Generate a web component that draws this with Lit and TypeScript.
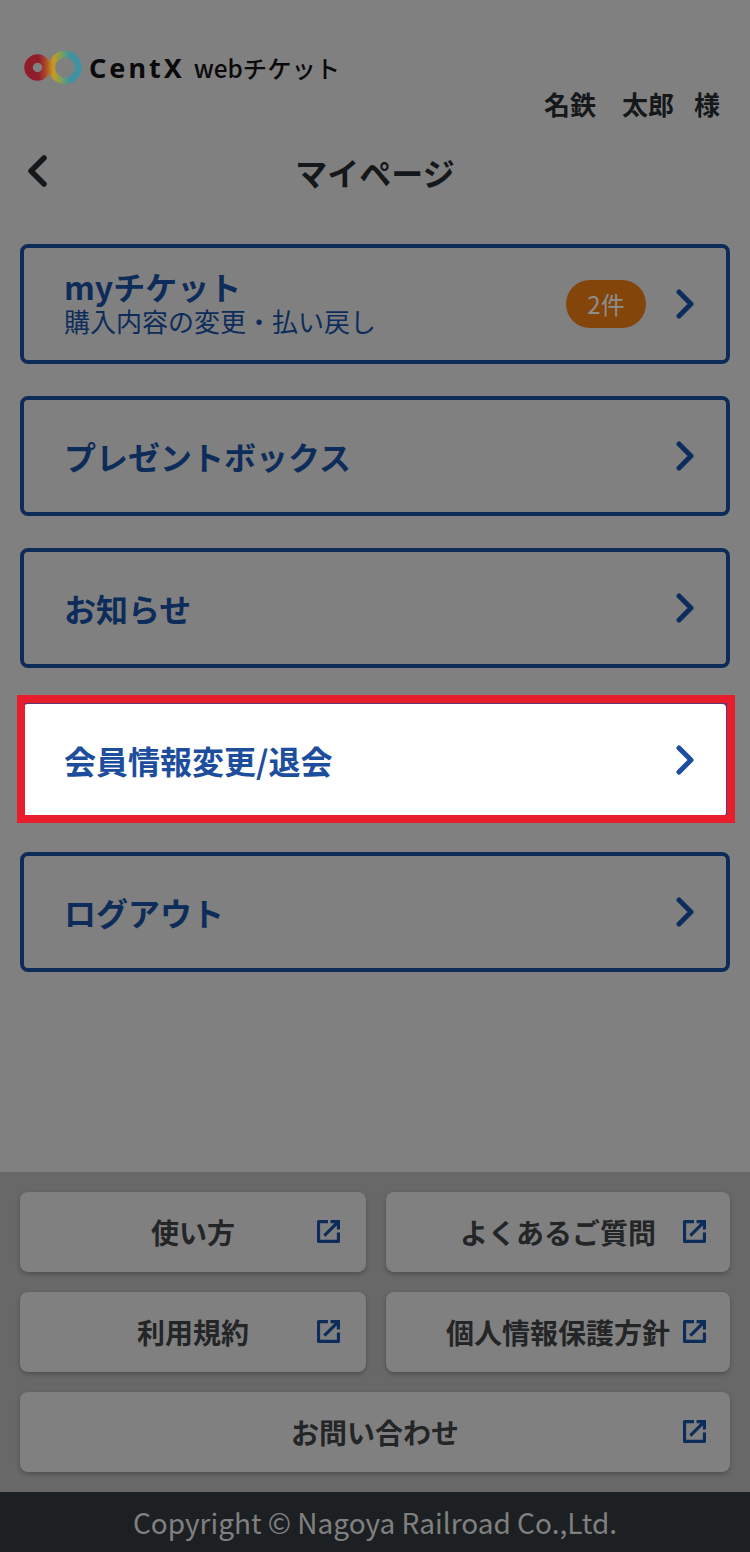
import {LitElement, css, html, svg} from 'lit';
import {customElement} from 'lit/decorators.js';

const chevron = svg`<path d="M3 3l12 12L3 27" fill="none" stroke="currentColor" stroke-width="5" stroke-linecap="round" stroke-linejoin="round"/>`;

const external = svg`<path d="M10.500 1.500H1.500v19h19V12" fill="none" stroke="currentColor" stroke-width="3" stroke-linejoin="round"/><path d="M7 15L20 2M13 1.500h7.500V9" fill="none" stroke="currentColor" stroke-width="3"/>`;

interface MenuItem {
  label: string;
  sub?: string;
  badge?: string;
  active?: boolean;
}

const MENU: MenuItem[] = [
  {label: 'myチケット', sub: '購入内容の変更・払い戻し', badge: '2件'},
  {label: 'プレゼントボックス'},
  {label: 'お知らせ'},
  {label: '会員情報変更/退会', active: true},
  {label: 'ログアウト'},
];

const LINKS = ['使い方', 'よくあるご質問', '利用規約', '個人情報保護方針', 'お問い合わせ'];

@customElement('app-root')
export class AppRoot extends LitElement {
  static styles = css`
    :host {
      display: flex;
      flex-direction: column;
      width: 750px;
      height: 1552px;
      background: #808080;
      color: #101214;
      font-family: 'Noto Sans CJK JP', 'Noto Sans', sans-serif;
    }

    .brand {
      display: flex;
      align-items: center;
      height: 38px;
      margin: 48px 0 0 24px;
    }
    .brand svg {
      width: 58px;
      height: 38px;
      margin-right: 7px;
    }
    .brand-name {
      font-family: 'Noto Sans', sans-serif;
      font-size: 27px;
      font-weight: 700;
      letter-spacing: 3px;
      color: #0a0a0a;
      margin-right: 9px;
    }
    .brand-sub {
      font-size: 24.300px;
      font-weight: 500;
      color: #0a0a0a;
    }

    .user {
      display: flex;
      justify-content: flex-end;
      white-space: pre;
      margin: 0 30px 0 0;
      height: 36px;
      line-height: 36px;
      font-size: 26px;
      font-weight: 700;
      color: #15181a;
    }
    .honorific {
      margin-left: 20px;
    }

    .title {
      display: flex;
      align-items: center;
      justify-content: center;
      position: relative;
      height: 60px;
      margin-top: 20px;
      font-size: 32px;
      font-weight: 700;
      color: #15181a;
    }
    .back {
      position: absolute;
      left: 26px;
      top: 12px;
      width: 22px;
      height: 34px;
      color: #15181a;
    }

    .menu {
      display: flex;
      flex-direction: column;
      gap: 32px;
      margin: 42px 20px 0;
    }
    .item {
      position: relative;
      box-sizing: border-box;
      display: flex;
      align-items: center;
      height: 120px;
      padding: 0 32px 0 40px;
      border: 4px solid #0e2c5a;
      border-radius: 8px;
      color: #0e2c5a;
    }
    .item.active {
      background: #fff;
      border-color: #5b3a78;
      color: #1d4e9e;
    }
    .item.active::after {
      content: '';
      position: absolute;
      left: -7px;
      top: -9px;
      right: -9px;
      bottom: -7px;
      border: 8px solid #e81e2c;
    }
    .text {
      flex: 1;
      min-width: 0;
    }
    .text.has-sub {
      margin-top: -4px;
    }
    .label {
      font-size: 32px;
      font-weight: 700;
      line-height: 40px;
    }
    .text.has-sub .label {
      line-height: 36px;
    }
    .sub {
      font-size: 26px;
      line-height: 30px;
      margin-top: 2px;
      font-weight: 400;
    }
    .badge {
      width: 80px;
      height: 48px;
      line-height: 48px;
      border-radius: 24px;
      margin-right: 30px;
      text-align: center;
      font-size: 24px;
      background: #84450b;
      color: #8e8e8e;
    }
    .arrow {
      flex: none;
      width: 18px;
      height: 30px;
    }

    footer {
      margin-top: auto;
    }
    .links {
      display: grid;
      grid-template-columns: 346px 344px;
      gap: 20px;
      padding: 20px;
      background: #686868;
    }
    .link {
      position: relative;
      display: flex;
      align-items: center;
      justify-content: center;
      height: 80px;
      border-radius: 8px;
      background: #808080;
      box-shadow: 0 2px 4px rgba(0, 0, 0, 0.25);
      font-size: 28px;
      font-weight: 700;
      color: #232527;
    }
    .link.wide {
      grid-column: 1 / -1;
    }
    .ext {
      position: absolute;
      right: 24px;
      top: 28px;
      width: 23px;
      height: 23px;
      color: #0e2c5a;
    }
    .link:nth-child(odd):not(.wide) .ext {
      right: 26px;
    }
    .copyright {
      height: 60px;
      line-height: 60px;
      text-align: center;
      font-size: 28px;
      background: #1d2022;
      color: #808080;
    }
  `;

  private renderItem(item: MenuItem) {
    return html`
      <div class="item ${item.active ? 'active' : ''}">
        <div class="text ${item.sub ? 'has-sub' : ''}">
          <div class="label">${item.label}</div>
          ${item.sub ? html`<div class="sub">${item.sub}</div>` : ''}
        </div>
        ${item.badge ? html`<div class="badge">${item.badge}</div>` : ''}
        <svg class="arrow" viewBox="0 0 18 30">${chevron}</svg>
      </div>
    `;
  }

  render() {
    return html`
      <div class="brand">
        <svg viewBox="0 0 58 38">
          <defs>
            <linearGradient id="loop" gradientUnits="userSpaceOnUse" x1="0" x2="58" y1="0" y2="0">
              <stop offset="0.25" stop-color="#8f1d2b" />
              <stop offset="0.38" stop-color="#ad4a2a" />
              <stop offset="0.5" stop-color="#c89a1e" />
              <stop offset="0.64" stop-color="#7fa05a" />
              <stop offset="0.78" stop-color="#3f93a0" />
            </linearGradient>
          </defs>
          <circle cx="13.500" cy="19.500" r="9" fill="none" stroke="url(#loop)" stroke-width="8.500" />
          <circle cx="41" cy="19.500" r="13.300" fill="none" stroke="url(#loop)" stroke-width="6.800" />
        </svg>
        <span class="brand-name">CentX</span>
        <span class="brand-sub">webチケット</span>
      </div>
      <div class="user">名鉄　太郎<span class="honorific">様</span></div>
      <div class="title">
        <svg class="back" viewBox="0 0 22 34">
          <path d="M18 4L5 17l13 13" fill="none" stroke="currentColor" stroke-width="5.500" stroke-linecap="round" stroke-linejoin="round" />
        </svg>
        マイページ
      </div>
      <div class="menu">${MENU.map((item) => this.renderItem(item))}</div>
      <footer>
        <div class="links">
          ${LINKS.map(
            (label, i) => html`
              <div class="link ${i === LINKS.length - 1 ? 'wide' : ''}">
                ${label}
                <svg class="ext" viewBox="0 0 22 22">${external}</svg>
              </div>
            `
          )}
        </div>
        <div class="copyright">Copyright © Nagoya Railroad Co.,Ltd.</div>
      </footer>
    `;
  }
}
